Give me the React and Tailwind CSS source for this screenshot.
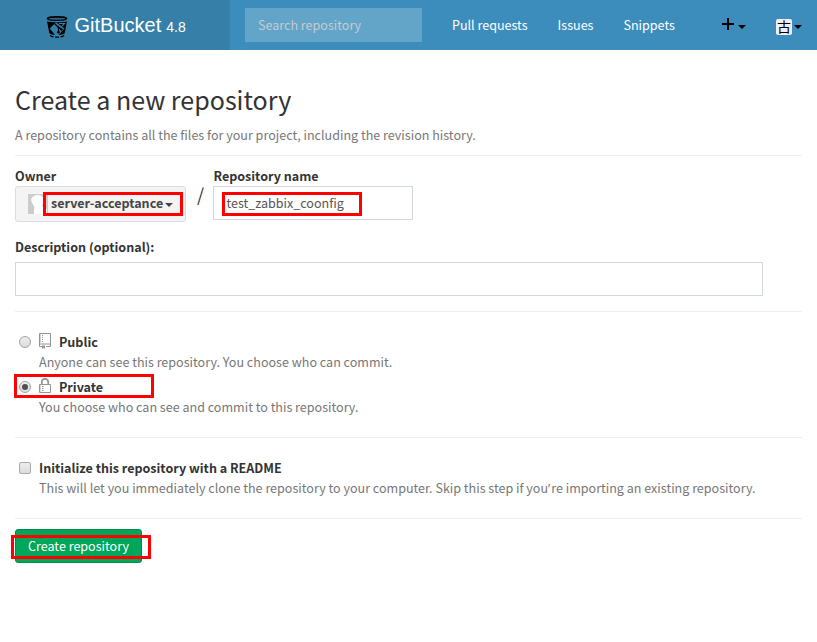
import React from "react";

function Caret({ className = "" }) {
  return (
    <span
      className={`inline-block h-0 w-0 border-x-4 border-t-4 border-x-transparent border-t-current ${className}`}
    />
  );
}

function Mark({ className }) {
  return <span className={`pointer-events-none absolute border-[3px] border-[#ff0000] ${className}`} />;
}

function BucketLogo() {
  return (
    <svg className="mt-[3px] h-6 w-[22px]" viewBox="0 0 22 24">
      <path d="M.6 3.500C.6 1.800 5 1 11 1s10.400.8 10.400 2.500S17 6 11 6 .6 5.200.6 3.500z" fill="#000" />
      <ellipse cx="11" cy="3.700" rx="8.500" ry="1" fill="#2b6587" />
      <path d="M1 6.300c4 1.300 16 1.300 20 0l-2.300 12c-1 .8-2.200 1.200-3.700 1.500H7c-1.500-.3-2.700-.7-3.700-1.500z" fill="#000" />
      <path d="M3.800 13.500L10 7.200l8.500 6.300-6 6.500H9z" fill="#367fa9" />
      <path d="M8.500 8.500l4 4v5M12 11.500l3.500 3.200" fill="none" stroke="#000" strokeWidth="1.300" />
      <circle cx="12.500" cy="17.300" r="1.300" fill="#000" />
      <circle cx="15.500" cy="14.500" r="1.200" fill="#000" />
      <path d="M13 8.500l5.500 0-2.500 2.500" fill="none" stroke="#367fa9" strokeWidth="1.100" />
      <path d="M4 20.500c1 .8 2 1.200 3.500 1.400M9 22.200h4M14.500 21.900c1.500-.2 2.700-.6 3.500-1.400" fill="none" stroke="#000" strokeWidth="1.200" />
    </svg>
  );
}

function RepoIcon() {
  return (
    <svg className="h-4 w-3" viewBox="0 0 12 16" fill="none" stroke="#949494">
      <path d="M3 13.500H.5V.5h11v13H7M.5 11h11" />
      <path d="M1.500 1v10" stroke="#d5d5d5" />
      <path d="M3.500 2v7" strokeDasharray="1 1" />
      <path d="M3 12.500V16l1.500-1.300L6 16v-3.500" fill="#949494" stroke="none" />
    </svg>
  );
}

function LockIcon() {
  return (
    <svg className="h-4 w-3" viewBox="0 0 12 16" fill="none" stroke="#949494">
      <path d="M.5 6.500h11v8H.5z" />
      <path d="M1.500 7v7" stroke="#d5d5d5" />
      <path d="M2.800 6.500V4a3.200 3.200 0 0 1 6.400 0v2.500" strokeWidth="1.700" />
      <path d="M3 8.500h1.500M3 10.500h1.500M3 12.500h1.500" />
    </svg>
  );
}

function Radio({ checked }) {
  return (
    <span className="flex h-3 w-3 items-center justify-center rounded-full border border-[#a3a3a3] bg-gradient-to-b from-[#ededed] to-[#dcdcdc]">
      {checked && <span className="h-1.5 w-1.5 rounded-full bg-[#505050]" />}
    </span>
  );
}

function Option({ icon, title, text, checked, marked }) {
  return (
    <div className="relative h-[45px] pl-1">
      <div className="flex h-5 items-center">
        <Radio checked={checked} />
        <span className="mb-[3px] ml-2">{icon}</span>
        <span className="ml-2 font-bold">{title}</span>
      </div>
      <div className="ml-5 h-5 text-[#777]">{text}</div>
      {marked && <Mark className="-left-px -top-[3px] h-6 w-[140px]" />}
    </div>
  );
}

export default function App() {
  return (
    <div className="h-[642px] w-[817px] overflow-hidden bg-white font-['Noto_Sans_CJK_SC','Open_Sans',sans-serif] text-[12.550px] leading-5 text-[#333]">
      <header className="flex h-[50px] bg-[#3c8dbc] text-white">
        <div className="flex w-[230px] items-center bg-[#367fa9] pl-[46px] font-['Liberation_Sans',Arial,sans-serif]">
          <BucketLogo />
          <span className="ml-[6.500px] text-[20px]">GitBucket</span>
          <span className="ml-[5px] mt-1 text-sm">4.8</span>
        </div>
        <div className="ml-[15px] mt-2 flex h-[34px] w-[177px] items-center bg-[#63a4c9] pl-[13px] text-[#c4ccd2]">
          Search repository
        </div>
        <nav className="ml-[30px] flex h-[50px] w-[269px] items-center gap-[30px] whitespace-nowrap">
          <span>Pull requests</span>
          <span>Issues</span>
          <span>Snippets</span>
        </nav>
        <div className="flex h-[50px] items-center text-black">
          <svg className="mb-0.5 ml-px h-3 w-3" viewBox="0 0 12 12">
            <path d="M0 6h12M6 0v12" stroke="#000" strokeWidth="2" />
          </svg>
          <Caret className="ml-1 mt-[3px]" />
          <span className="ml-[30px] mt-1 h-4 w-4 rounded-[2px] bg-[#f0eef4] text-center text-[14px] leading-[14px]">古</span>
          <Caret className="ml-0.5 mt-[3px]" />
        </div>
      </header>

      <main className="px-[15px] pt-[33px]">
        <h1 className="h-[34px] text-[25.060px] font-normal leading-[33px]">Create a new repository</h1>
        <p className="mt-2 h-5 text-[#777]">
          A repository contains all the files for your project, including the revision history.
        </p>
        <hr className="mt-[10px] border-[#eee]" />

        <div className="mt-[10px] flex">
          <div>
            <div className="h-5 font-bold">Owner</div>
            <div className="relative flex h-9 w-[171px] items-center rounded-[3px] border border-[#ddd] bg-[#f4f4f4] font-bold text-[#444]">
              <svg className="ml-3 h-5 w-5" viewBox="0 0 20 20">
                <path d="M0 0h20v20H0z" fill="#ccc" />
                <path d="M10 1c4 0 6 3 5.500 6.500-.2 2-1 3-1.500 4 0 2 4 2 5 4V20H6v-3c0-2 1-3 0-5C4 9 3 7 3.200 5 4 2.500 7 1 10 1z" fill="#fff" />
              </svg>
              <span className="mb-0.5 ml-[3px]">server-acceptance</span>
              <Caret className="ml-0.5 mt-px" />
              <Mark className="left-[27px] top-[5px] h-6 w-[140px]" />
            </div>
          </div>
          <div className="w-[27px] pl-[11px] pt-[18px] text-[18px]">/</div>
          <div>
            <div className="h-5 pl-[0.500px] font-bold">Repository name</div>
            <div className="relative flex h-[34px] w-[200px] items-center border border-[#d2d6de] pl-[12.500px] text-[#555]">
              test_zabbix_coonfig
              <Mark className="left-2 top-[5px] h-6 w-[140px]" />
            </div>
          </div>
        </div>

        <div className="mt-[15px] h-[25px] font-bold">Description (optional):</div>
        <div className="h-[34px] w-[748px] border border-[#d2d6de]" />
        <hr className="mt-[15px] border-[#eee]" />

        <div className="mt-5">
          <Option icon={<RepoIcon />} title="Public" text="Anyone can see this repository. You choose who can commit." />
          <Option icon={<LockIcon />} title="Private" text="You choose who can see and commit to this repository." checked marked />
        </div>
        <hr className="mt-[15px] border-[#eee]" />

        <div className="mt-5 pl-1">
          <div className="flex h-5 items-center">
            <span className="h-3 w-3 rounded-[2px] border border-[#a9a9a9] bg-gradient-to-b from-[#ededed] to-[#dcdcdc]" />
            <span className="ml-2 font-bold">Initialize this repository with a README</span>
          </div>
          <div className="ml-5 h-5 whitespace-nowrap text-[#777]">
            This will let you immediately clone the repository to your computer. Skip this step if you
            <span className="pr-px font-['Open_Sans',sans-serif]">’</span>
            re importing an existing repository.
          </div>
        </div>
        <hr className="mt-5 border-[#eee]" />

        <div className="relative mt-[10px] flex h-[34px] w-[127px] items-center rounded-[3px] border border-[#008d4c] bg-[#00a65a] pl-3 text-white">
          Create repository
          <Mark className="-left-[5px] top-[5px] h-6 w-[140px]" />
        </div>
      </main>
    </div>
  );
}
